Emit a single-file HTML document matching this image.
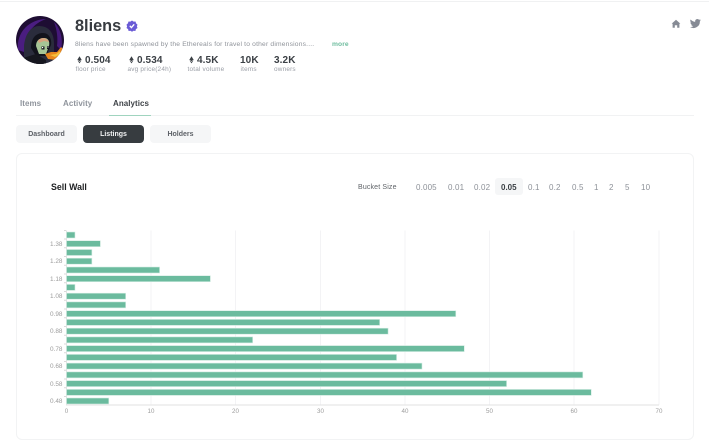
<!DOCTYPE html>
<html><head><meta charset="utf-8"><style>
html,body{margin:0;padding:0;background:#fff}
#p{position:relative;width:709px;height:447px;overflow:hidden;background:#fff;font-family:"Liberation Sans",sans-serif;filter:blur(.35px)}
#p div,#p svg{position:absolute}
.t{white-space:nowrap;line-height:12px}
.v{font-size:10px;font-weight:700;color:#3b4045;top:55px;letter-spacing:.1px}
.l{font-size:6.4px;color:#9a9ea6;top:64px;letter-spacing:.2px}
.tab{font-size:8px;font-weight:700;top:97.5px;letter-spacing:.05px;color:#8f949c}
.b{height:18px;top:125px;width:61px;border-radius:4px;background:#f5f6f7;color:#5d6167;font-size:7px;font-weight:700;line-height:20px;text-align:center;letter-spacing:0}
.s{font-size:8px;color:#8d9198;top:181.5px;letter-spacing:.15px}
.y{font-size:6.4px;color:#9c9c9c;width:62.5px;left:0;text-align:right;line-height:8px;margin-top:.5px}
.x{font-size:6.2px;color:#9c9c9c;top:408px;width:20px;text-align:center;line-height:8px}
</style></head><body><div id="p">
<div style="left:0;top:1px;width:709px;height:1px;background:#f0f1f2"></div>
<svg style="left:16px;top:16px" width="48" height="48" viewBox="0 0 48 48">
<defs><clipPath id="c"><circle cx="24" cy="24" r="24"/></clipPath></defs>
<g clip-path="url(#c)">
<rect width="48" height="48" fill="#1e0d33"/>
<path d="M2 34C0 16 14 3 30 3C18 7 8 18 8 36Z" fill="#4a1d80"/>
<path d="M38 6C46 14 47 26 45 34L41 30C42 22 41 14 38 6Z" fill="#45197a"/>
<path d="M8 48V30C9 18 15 10 23 10C33 10 38 17 38 28V48Z" fill="#2a2c3c"/>
<path d="M15 32C15 22 20 17 27 17C33 17 36 23 35 29L30 40H20Z" fill="#12131c"/>
<path d="M20 30C20 24 24 22 28 22C32 22 34 25 33 30L30 38H23Z" fill="#a6c596"/>
<path d="M22 25C24 21 31 21 33 26L28 25L23 27Z" fill="#d8a47e"/>
<rect x="25.500" y="30.500" width="3" height="3" fill="#14151d"/><rect x="31" y="30" width="2.500" height="3" fill="#14151d"/>
<rect x="26" y="31" width="1.200" height="1.200" fill="#fff"/><rect x="31.500" y="30.500" width="1" height="1" fill="#fff"/>
<path d="M29 38L35 36L41 36L45 31L48 34V40L40 44L32 43Z" fill="#e8871e"/>
<path d="M34 39L40 38L44 35L45 38L39 41Z" fill="#f6c13c"/>
<path d="M7 48V42L20 38L30 44V48Z" fill="#16171f"/>
</g></svg>
<div class="t" style="left:75px;top:16px;font-size:16.300px;font-weight:700;color:#373b40;line-height:20px">8liens</div>
<svg style="left:126px;top:20px" width="12" height="12" viewBox="0 0 12 12"><path d="M6 .5L7.600 1.600 9.500 1.500 10.100 3.400 11.500 4.600 10.900 6.400 11.500 8 9.900 9.100 9.400 11 7.500 10.800 6 11.800 4.500 10.800 2.600 11 2.100 9.100.5 8 1.100 6.400.5 4.600 1.900 3.400 2.500 1.500 4.400 1.600Z" fill="#6a5bd6"/><path d="M3.800 5.800L5.400 7.600 8.200 4.300" fill="none" stroke="#fff" stroke-width="1.300"/></svg>
<div class="t" style="left:75px;top:39px;font-size:6.700px;color:#8f939a;letter-spacing:.19px">8liens have been spawned by the Ethereals for travel to other dimensions....</div>
<div class="t" style="left:332px;top:39px;font-size:6.700px;font-weight:700;color:#6fbd9f;letter-spacing:.1px">more</div>
<svg style="left:76.500px;top:56px" width="5" height="8" viewBox="0 0 6 9"><path d="M3 0L5.600 4.300 3 5.900.4 4.300ZM.6 5.100L3 6.600 5.400 5.100 3 8.600Z" fill="#3b4045"/></svg>
<svg style="left:128.500px;top:56px" width="5" height="8" viewBox="0 0 6 9"><path d="M3 0L5.600 4.300 3 5.900.4 4.300ZM.6 5.100L3 6.600 5.400 5.100 3 8.600Z" fill="#3b4045"/></svg>
<svg style="left:188.500px;top:56px" width="5" height="8" viewBox="0 0 6 9"><path d="M3 0L5.600 4.300 3 5.900.4 4.300ZM.6 5.100L3 6.600 5.400 5.100 3 8.600Z" fill="#3b4045"/></svg>
<div class="t v" style="left:85px">0.504</div><div class="t l" style="left:75.500px">floor price</div>
<div class="t v" style="left:137px">0.534</div><div class="t l" style="left:127.500px">avg price(24h)</div>
<div class="t v" style="left:197px">4.5K</div><div class="t l" style="left:187.500px">total volume</div>
<div class="t v" style="left:240px">10K</div><div class="t l" style="left:240.500px">items</div>
<div class="t v" style="left:274px">3.2K</div><div class="t l" style="left:274px">owners</div>
<svg style="left:670.500px;top:19px" width="10" height="10" viewBox="0 0 10 10"><path d="M5 .8L9.300 4.600 8.400 4.800V8.800H6.200V6.200H3.800V8.800H1.600V4.800L.7 4.600Z" fill="#868b95"/></svg>
<svg style="left:690px;top:18px" width="11" height="11" viewBox="0 0 24 24"><path d="M23.600 4.600c-.9.4-1.800.7-2.800.8 1-.6 1.800-1.500 2.100-2.700-.9.6-2 1-3.100 1.200a4.900 4.900 0 0 0-8.400 4.500C7.400 8.200 3.800 6.200 1.400 3.300a4.900 4.900 0 0 0 1.500 6.600c-.8 0-1.600-.2-2.200-.6 0 2.400 1.700 4.400 3.900 4.900-.7.200-1.500.2-2.200.1.600 1.900 2.400 3.300 4.600 3.400A9.900 9.900 0 0 1 0 19.700a14 14 0 0 0 21.500-12.400c1-.7 1.800-1.600 2.100-2.700Z" fill="#868b95"/></svg>
<div class="t tab" style="left:20px">Items</div>
<div class="t tab" style="left:63px">Activity</div>
<div class="t tab" style="left:113px;color:#3f4348">Analytics</div>
<div style="left:16px;top:115px;width:678px;height:1px;background:#f1f2f3"></div>
<div style="left:109px;top:114.500px;width:42px;height:1.500px;background:#a0d4bf"></div>
<div class="b" style="left:16px">Dashboard</div>
<div class="b" style="left:83px;background:#373c40;color:#f2f3f4">Listings</div>
<div class="b" style="left:150px">Holders</div>
<div style="left:16px;top:152.500px;width:676px;height:285px;border:1px solid #f2f3f4;border-radius:6px"></div>
<div class="t" style="left:51px;top:181px;font-size:8.800px;font-weight:700;color:#1d1f21">Sell Wall</div>
<div class="t" style="left:358px;top:181.500px;font-size:7px;color:#5f6368;letter-spacing:.15px">Bucket Size</div>
<div style="left:495px;top:178px;width:28px;height:17px;border-radius:3px;background:#f5f6f7"></div>
<div class="t s" style="left:416px">0.005</div><div class="t s" style="left:448px">0.01</div><div class="t s" style="left:474px">0.02</div>
<div class="t s" style="left:501px;color:#3b4045;font-weight:700;letter-spacing:0">0.05</div><div class="t s" style="left:528px">0.1</div><div class="t s" style="left:549px">0.2</div>
<div class="t s" style="left:572px">0.5</div><div class="t s" style="left:594px">1</div><div class="t s" style="left:609px">2</div>
<div class="t s" style="left:625px">5</div><div class="t s" style="left:641px">10</div>
<svg style="left:0;top:0" width="709" height="447" viewBox="0 0 709 447">
<g stroke="#f3f3f5" stroke-width="1"><path d="M151 230.500V405M235.500 230.500V405M320.500 230.500V405M405 230.500V405M489.500 230.500V405M574 230.500V405M659 230.500V405"/></g>
<path d="M66.500 230.500V405H659" fill="none" stroke="#e2e2e2"/>
<g stroke="#d9d9d9"><path d="M64 230.500H66M64 239H66M64 247.800H66M64 256.500H66M64 265.300H66M64 274H66M64 282.800H66M64 291.500H66M64 300.300H66M64 309H66M64 317.800H66M64 326.500H66M64 335.300H66M64 344H66M64 352.800H66M64 361.500H66M64 370.300H66M64 379H66M64 387.800H66M64 396.500H66"/></g>
<g fill="#6bbb9e" stroke="#d5ede4" stroke-width=".6">
<rect x="66.500" y="232" width="8.500" height="6"/><rect x="66.500" y="240.700" width="33.900" height="6"/><rect x="66.500" y="249.500" width="25.400" height="6"/><rect x="66.500" y="258.200" width="25.400" height="6"/><rect x="66.500" y="267" width="93.100" height="6"/><rect x="66.500" y="275.700" width="143.900" height="6"/><rect x="66.500" y="284.400" width="8.500" height="6"/><rect x="66.500" y="293.200" width="59.200" height="6"/><rect x="66.500" y="301.900" width="59.200" height="6"/><rect x="66.500" y="310.700" width="389.300" height="6"/><rect x="66.500" y="319.400" width="313.200" height="6"/><rect x="66.500" y="328.200" width="321.600" height="6"/><rect x="66.500" y="336.900" width="186.200" height="6"/><rect x="66.500" y="345.600" width="397.800" height="6"/><rect x="66.500" y="354.400" width="330.100" height="6"/><rect x="66.500" y="363.100" width="355.500" height="6"/><rect x="66.500" y="371.900" width="516.300" height="6"/><rect x="66.500" y="380.600" width="440.100" height="6"/><rect x="66.500" y="389.400" width="524.800" height="6"/><rect x="66.500" y="398" width="42.300" height="6"/>
</g></svg>
<div class="y" style="top:240px">1.38</div><div class="y" style="top:257px">1.28</div><div class="y" style="top:275px">1.18</div><div class="y" style="top:292px">1.08</div>
<div class="y" style="top:310px">0.98</div><div class="y" style="top:327px">0.88</div><div class="y" style="top:345px">0.78</div><div class="y" style="top:362px">0.68</div><div class="y" style="top:380px">0.58</div><div class="y" style="top:397px">0.48</div>
<div class="x" style="left:56.500px">0</div><div class="x" style="left:141px">10</div><div class="x" style="left:225.500px">20</div><div class="x" style="left:310.500px">30</div><div class="x" style="left:395px">40</div><div class="x" style="left:479.500px">50</div><div class="x" style="left:564px">60</div><div class="x" style="left:649px">70</div>
</div></body></html>
